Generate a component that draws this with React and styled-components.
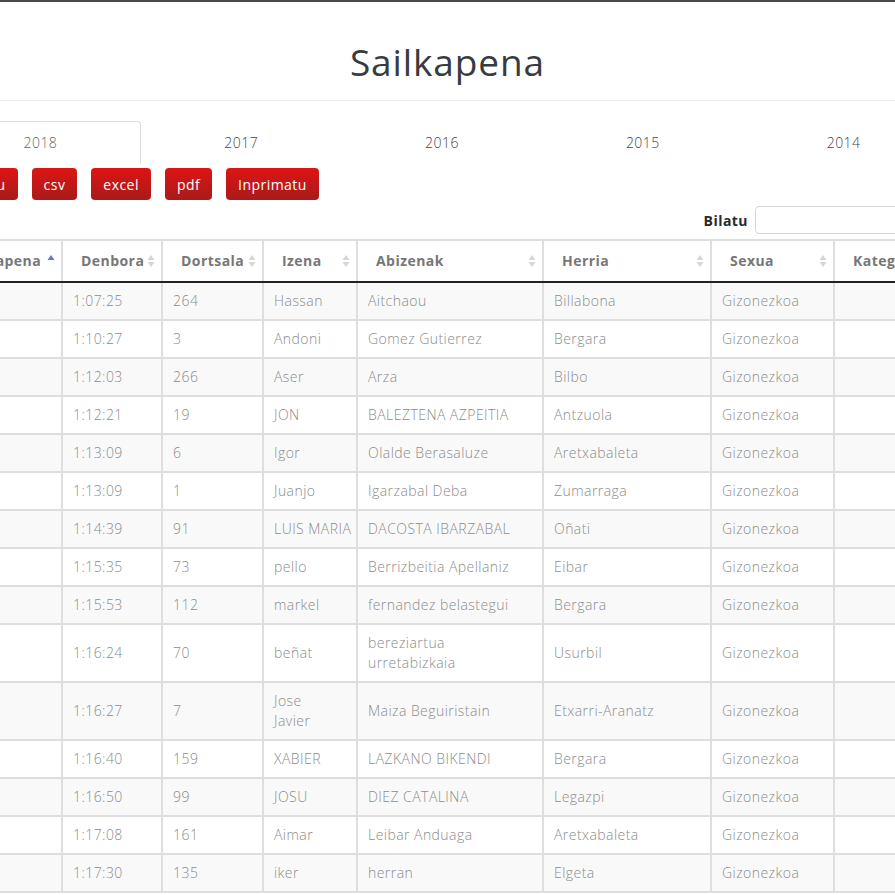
import React from "react";
import styled, { createGlobalStyle } from "styled-components";

const rows = [
  ["1:07:25", "264", "Hassan", "Aitchaou", "Billabona"],
  ["1:10:27", "3", "Andoni", "Gomez Gutierrez", "Bergara"],
  ["1:12:03", "266", "Aser", "Arza", "Bilbo"],
  ["1:12:21", "19", "JON", "BALEZTENA AZPEITIA", "Antzuola"],
  ["1:13:09", "6", "Igor", "Olalde Berasaluze", "Aretxabaleta"],
  ["1:13:09", "1", "Juanjo", "Igarzabal Deba", "Zumarraga"],
  ["1:14:39", "91", "LUIS\u00a0MARIA", "DACOSTA IBARZABAL", "Oñati"],
  ["1:15:35", "73", "pello", "Berrizbeitia Apellaniz", "Eibar"],
  ["1:15:53", "112", "markel", "fernandez belastegui", "Bergara"],
  ["1:16:24", "70", "beñat", "bereziartua urretabizkaia", "Usurbil"],
  ["1:16:27", "7", "Jose Javier", "Maiza Beguiristain", "Etxarri-Aranatz"],
  ["1:16:40", "159", "XABIER", "LAZKANO BIKENDI", "Bergara"],
  ["1:16:50", "99", "JOSU", "DIEZ CATALINA", "Legazpi"],
  ["1:17:08", "161", "Aimar", "Leibar Anduaga", "Aretxabaleta"],
  ["1:17:30", "135", "iker", "herran", "Elgeta"],
];

const columns = [
  { label: "Sailkapena", width: 121, sort: "asc" },
  { label: "Denbora", width: 100 },
  { label: "Dortsala", width: 101 },
  { label: "Izena", width: 94 },
  { label: "Abizenak", width: 186 },
  { label: "Herria", width: 168 },
  { label: "Sexua", width: 123 },
  { label: "Kategoria", width: 111 },
];

const years = ["2018", "2017", "2016", "2015", "2014"];
const buttons = ["Kopiatu", "csv", "excel", "pdf", "Inprimatu"];

const GlobalStyle = createGlobalStyle`
  body {
    margin: 0;
    background: #fff;
    font-family: "Open Sans", "Liberation Sans", sans-serif;
    letter-spacing: 0.45px;
    overflow: hidden;
  }
`;

const Page = styled.div`
  border-top: 2px solid #4a4a4a;
  height: 893px;
  overflow: hidden;
`;

const Header = styled.header`
  height: 99px;
  box-sizing: border-box;
  padding-top: 20px;
  border-bottom: 1px solid #ebebeb;
  display: flex;
  align-items: center;
  justify-content: center;
`;

const Title = styled.h1`
  margin: 0;
  font-size: 37px;
  font-weight: 500;
  color: #383b40;
  letter-spacing: 0.9px;
`;

const Content = styled.div`
  width: 1004px;
  margin-left: -60px;
`;

const Tabs = styled.div`
  display: flex;
  margin-top: 20px;
  border-bottom: 1px solid #dcdcdc;
`;

const Tab = styled.div`
  flex: 1;
  height: 41px;
  display: flex;
  align-items: center;
  justify-content: center;
  font-size: 14px;
  font-weight: 300;
  color: ${(p) => (p.$active ? "#666" : "#444")};
  background: #fff;
  border: 1px solid ${(p) => (p.$active ? "#dcdcdc" : "transparent")};
  border-bottom-color: ${(p) => (p.$active ? "#fff" : "transparent")};
  border-radius: 4px 4px 0 0;
  margin-bottom: -1px;
`;

const Buttons = styled.div`
  display: flex;
  gap: 14px;
  margin-top: 4px;
`;

const RedButton = styled.button`
  height: 32px;
  padding: 0 12px;
  border: none;
  border-radius: 4px;
  background: linear-gradient(to bottom, #de1414 0%, #a81b1b 100%);
  color: #fff;
  font-family: inherit;
  letter-spacing: inherit;
  font-size: 14px;
  font-weight: 500;
  cursor: pointer;
`;

const Filter = styled.div`
  display: flex;
  justify-content: flex-end;
  align-items: center;
  gap: 7px;
  margin-top: 6px;
`;

const FilterLabel = styled.label`
  font-size: 14px;
  font-weight: 700;
  color: #2a2a2a;
`;

const SearchInput = styled.input`
  width: 189px;
  height: 28px;
  border: 1px solid #d4d4d4;
  border-radius: 4px;
  padding: 0 6px;
  box-sizing: border-box;
`;

const Table = styled.table`
  margin-top: 5px;
  width: 1004px;
  table-layout: fixed;
  border-collapse: collapse;
  font-size: 14px;
`;

const Th = styled.th`
  border: 2px solid #dedede;
  border-bottom: 2px solid #222;
  padding: 10px 6px 10px 18px;
  text-align: left;
  font-weight: 700;
  color: #777;
  line-height: 20px;
`;

const ThInner = styled.div`
  display: flex;
  align-items: center;
  justify-content: space-between;
  white-space: nowrap;
`;

const Tr = styled.tr`
  background: ${(p) => (p.$odd ? "#f9f9f9" : "#fff")};
`;

const Td = styled.td`
  border: 2px solid #dedede;
  padding: 8px 14px 8px 10px;
  line-height: 20px;
  color: #8c8c8c;
  font-weight: 300;
  vertical-align: middle;
`;

const SortIcon = ({ dir }) => (
  <svg width="8" height="16" viewBox="0 0 8 16">
    <path d="M4 2 L7.5 7 H0.5 Z" fill={dir === "asc" ? "#6f6fe0" : "#d6d6d6"} />
    {dir !== "asc" && <path d="M4 14 L7.5 9 H0.5 Z" fill="#d6d6d6" />}
  </svg>
);

export default function App() {
  return (
    <Page>
      <GlobalStyle />
      <Header>
        <Title>Sailkapena</Title>
      </Header>
      <Content>
        <Tabs>
          {years.map((y, i) => (
            <Tab key={y} $active={i === 0}>
              {y}
            </Tab>
          ))}
        </Tabs>
        <Buttons>
          {buttons.map((b) => (
            <RedButton key={b}>{b}</RedButton>
          ))}
        </Buttons>
        <Filter>
          <FilterLabel>Bilatu</FilterLabel>
          <SearchInput type="search" />
        </Filter>
        <Table>
          <colgroup>
            {columns.map((c) => (
              <col key={c.label} style={{ width: c.width }} />
            ))}
          </colgroup>
          <thead>
            <tr>
              {columns.map((c) => (
                <Th key={c.label}>
                  <ThInner>
                    {c.label}
                    <SortIcon dir={c.sort} />
                  </ThInner>
                </Th>
              ))}
            </tr>
          </thead>
          <tbody>
            {rows.map((r, i) => (
              <Tr key={i} $odd={i % 2 === 0}>
                <Td>{i + 1}</Td>
                {r.map((v, j) => (
                  <Td key={j}>{v}</Td>
                ))}
                <Td>Gizonezkoa</Td>
                <Td />
              </Tr>
            ))}
          </tbody>
        </Table>
      </Content>
    </Page>
  );
}
